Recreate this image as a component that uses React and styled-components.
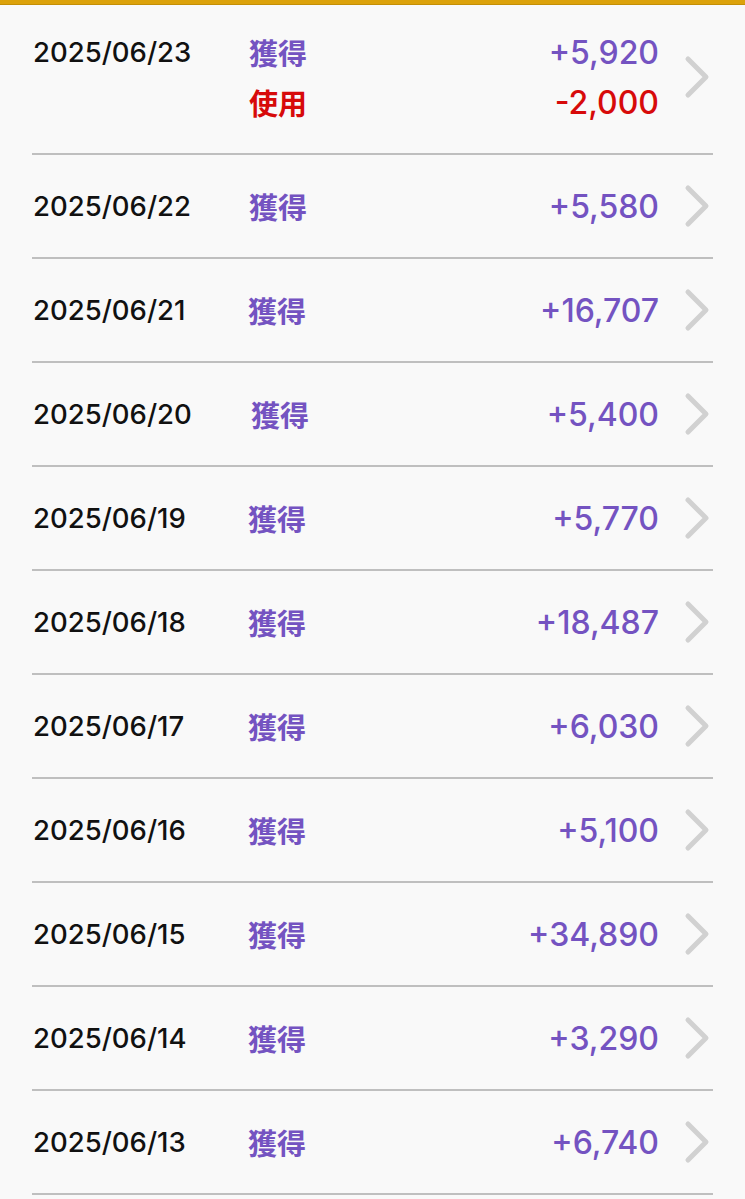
import React from "react";
import styled, { createGlobalStyle } from "styled-components";

const GlobalStyle = createGlobalStyle`
  html, body {
    margin: 0;
    padding: 0;
    background: #f9f9f9;
  }
  body {
    font-family: Inter, "Noto Sans CJK JP", sans-serif;
    -webkit-font-smoothing: antialiased;
  }
`;

const Page = styled.div`
  min-height: 1199px;
  background: #f9f9f9;
`;

const TopBar = styled.div`
  height: 5px;
  background: #dca20b;
  border-bottom: 1px solid #c48f06;
  box-sizing: border-box;
`;

const List = styled.ul`
  list-style: none;
  margin: 0 32px;
  padding: 0;
`;

const Row = styled.li`
  display: flex;
  align-items: center;
  padding: 26px 0;
  border-bottom: 2px solid #bfbfbf;

  &:first-child {
    padding-top: 22px;
    padding-bottom: 26px;
  }
`;

const DateCell = styled.div`
  align-self: flex-start;
  width: 215px;
  flex-shrink: 0;
  line-height: 50px;
  font-size: 27.5px;
  font-weight: 500;
  color: #111;
  padding-left: 1px;
`;

const Entries = styled.div`
  flex: 1;
  display: flex;
  flex-direction: column;
`;

const Entry = styled.div`
  display: flex;
  justify-content: space-between;
  align-items: center;
  height: 50px;
  color: ${(p) => (p.$kind === "use" ? "#d70a0a" : "#7453c1")};
`;

const Label = styled.span`
  font-family: "Noto Sans CJK JP", sans-serif;
  font-size: 29px;
  font-weight: 700;
  padding-left: ${(p) => p.$shift}px;
`;

const Amount = styled.span`
  font-size: 32px;
  font-weight: 500;
`;

const Chevron = styled.svg`
  width: 26px;
  height: 44px;
  margin-left: 25px;
  margin-right: 3px;
  flex-shrink: 0;
`;

const rows = [
  { date: "2025/06/23", shift: 1, items: [["get", "+5,920"], ["use", "-2,000"]] },
  { date: "2025/06/22", shift: 1, items: [["get", "+5,580"]] },
  { date: "2025/06/21", shift: -2, items: [["get", "+16,707"]] },
  { date: "2025/06/20", shift: 3, items: [["get", "+5,400"]] },
  { date: "2025/06/19", shift: -1, items: [["get", "+5,770"]] },
  { date: "2025/06/18", shift: -1, items: [["get", "+18,487"]] },
  { date: "2025/06/17", shift: -3, items: [["get", "+6,030"]] },
  { date: "2025/06/16", shift: -1, items: [["get", "+5,100"]] },
  { date: "2025/06/15", shift: -1, items: [["get", "+34,890"]] },
  { date: "2025/06/14", shift: -1, items: [["get", "+3,290"]] },
  { date: "2025/06/13", shift: -1, items: [["get", "+6,740"]] },
];

const Arrow = () => (
  <Chevron viewBox="0 0 26 44">
    <path
      d="M4 4 L22 22 L4 40"
      fill="none"
      stroke="#d1d1d1"
      strokeWidth="5"
      strokeLinecap="round"
      strokeLinejoin="round"
    />
  </Chevron>
);

export default function App() {
  return (
    <Page>
      <GlobalStyle />
      <TopBar />
      <List>
        {rows.map((row) => (
          <Row key={row.date}>
            <DateCell>{row.date}</DateCell>
            <Entries>
              {row.items.map(([kind, amount]) => (
                <Entry key={kind} $kind={kind}>
                  <Label $shift={row.shift}>{kind === "use" ? "使用" : "獲得"}</Label>
                  <Amount>{amount}</Amount>
                </Entry>
              ))}
            </Entries>
            <Arrow />
          </Row>
        ))}
      </List>
    </Page>
  );
}
